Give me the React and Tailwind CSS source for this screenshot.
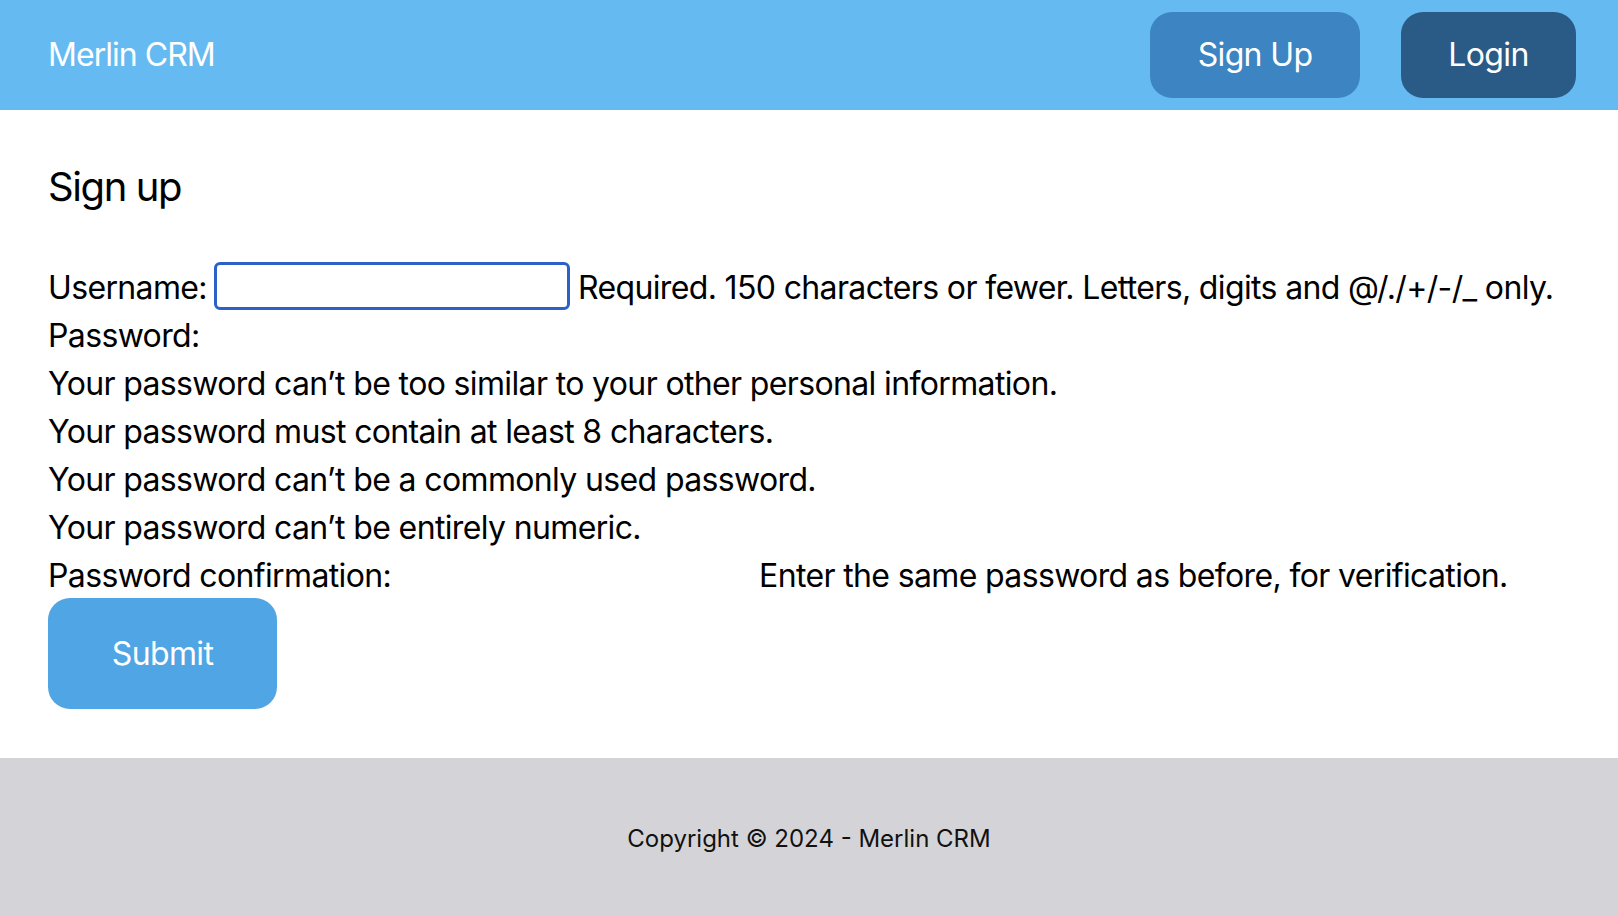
import React from "react";

export default function App() {
  const font = { fontFamily: "Inter, 'Noto Sans', sans-serif" };
  return (
    <div className="min-h-screen flex flex-col bg-white text-black" style={font}>
      <header className="h-[110px] bg-[#66baf2] flex items-center justify-between pl-[48px] pr-[42px]">
        <div className="text-[32px] leading-[48px] tracking-[-0.03em] text-white">Merlin CRM</div>
        <div className="flex items-center gap-[41px] -mt-[1px]">
          <button className="h-[86px] w-[210px] rounded-[22px] bg-[#3d84c2] text-white text-[32px] leading-[48px] tracking-[-0.02em]">
            Sign Up
          </button>
          <button className="h-[86px] w-[175px] rounded-[22px] bg-[#2a5a86] text-white text-[32px] leading-[48px] tracking-[-0.02em]">
            Login
          </button>
        </div>
      </header>

      <main className="pl-[48px] pt-[53px] pb-[49px]">
        <h1 className="text-[40px] leading-[48px] tracking-[-0.035em]">Sign up</h1>
        <form className="mt-[53px] text-[32px] leading-[48px] tracking-[-0.02em]">
          <div className="flex items-center h-[48px]">
            <span>Username:</span>
            <span className="ml-[7px] w-[356px] h-[48px] -translate-y-[2px] border-[3px] border-[#2b61c8] rounded-[6px] bg-white"></span>
            <span className="ml-[8px]">Required. 150 characters or fewer. Letters, digits and @/./+/-/_ only.</span>
          </div>
          <div className="h-[48px]">Password:</div>
          <ul>
            <li>Your password can’t be too similar to your other personal information.</li>
            <li>Your password must contain at least 8 characters.</li>
            <li>Your password can’t be a commonly used password.</li>
            <li>Your password can’t be entirely numeric.</li>
          </ul>
          <div className="flex items-center h-[48px]">
            <span>Password confirmation:</span>
            <span className="ml-[8px] w-[352px] h-[48px]"></span>
            <span className="ml-[8px]">Enter the same password as before, for verification.</span>
          </div>
          <button
            type="button"
            className="-mt-[2px] w-[229px] h-[111px] rounded-[22px] bg-[#50a5e4] text-white text-[32px] leading-[48px] tracking-[-0.02em]"
          >
            Submit
          </button>
        </form>
      </main>

      <footer className="bg-[#d4d4d8] pt-[65px] pb-[63px] text-center text-[24px] leading-[32px] text-[#111]">
        Copyright © 2024 - Merlin CRM
      </footer>
    </div>
  );
}
